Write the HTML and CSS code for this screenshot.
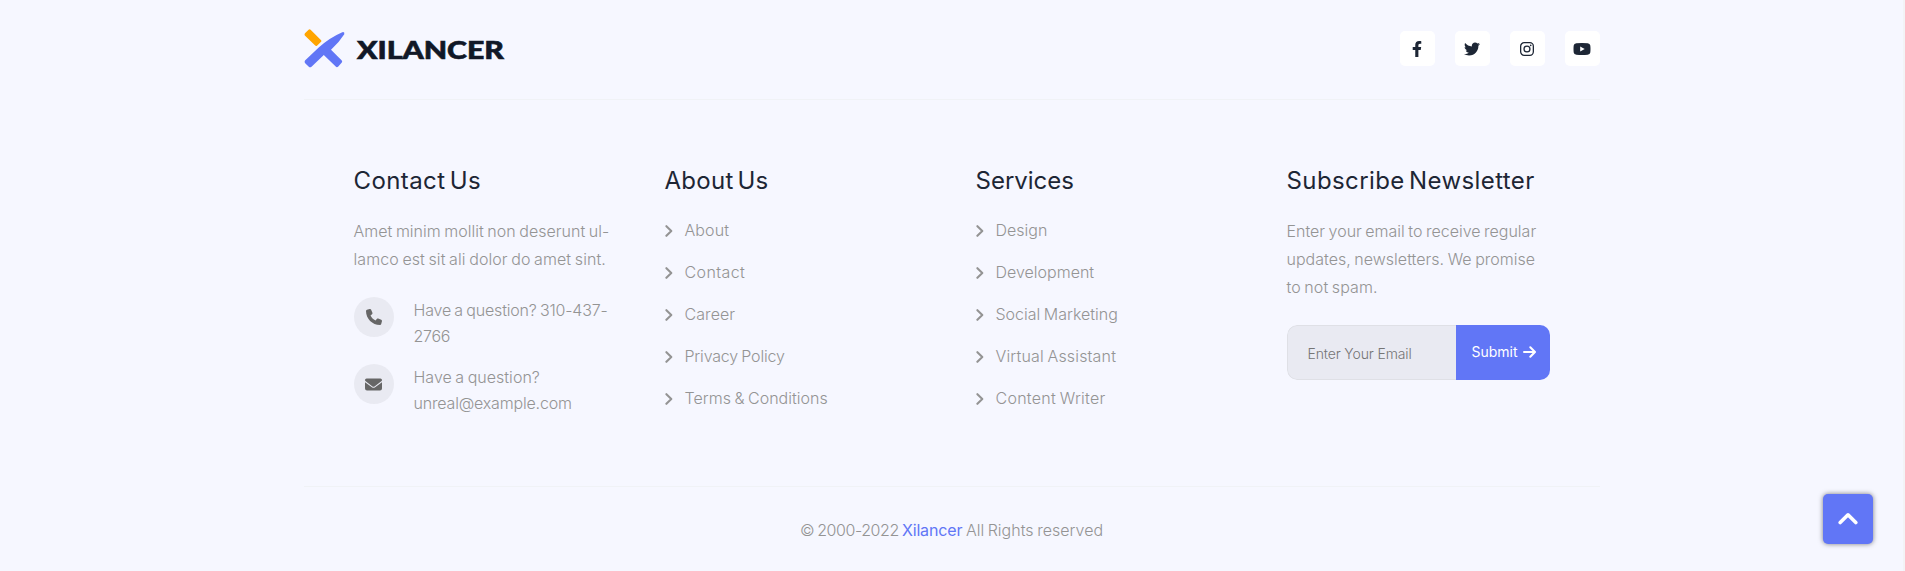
FILE: index.html
```
<!DOCTYPE html>
<html lang="en">
<head>
<meta charset="utf-8">
<title>Xilancer</title>
<link rel="stylesheet" href="styles.css">
</head>
<body>
<svg class="sprite" aria-hidden="true">
  <symbol id="chevron" viewBox="0 0 8 12"><path d="M1.4 1.2 6.3 6 1.4 10.8" fill="none" stroke="currentColor" stroke-width="2.100" stroke-linecap="round" stroke-linejoin="round"/></symbol>
</svg>
<footer class="footer">
  <div class="container">
    <div class="top">
      <a class="logo">
        <svg width="42" height="40" viewBox="0 0 42 40">
          <path d="M1 4.300 4.600.7Q5.600 0 6.600.8L17.100 11.200Q17.800 12 17.100 12.800L13 16.700Q12 17.400 11.200 16.600L.8 6.500Q.1 5.300 1 4.300Z" fill="#ffa500"/>
          <path d="M1 31.500 15 18.200Q26 8.500 38.300 3.200 40.800 2.700 40.300 5.200 35 13.500 27 20.700L37.800 31.500Q38.600 32.500 37.800 33.500L34.300 37.500Q33 38.900 31.700 37.600L19.800 26 7.500 37.700Q6 38.900 4.800 37.700L1.200 34.200Q0 33 1 31.500Z" fill="#6176f6"/>
        </svg>
        <svg width="150" height="30" viewBox="0 0 150 30" class="logo-word"><text x="0" y="24.500" textLength="147" lengthAdjust="spacingAndGlyphs">XILANCER</text></svg>
      </a>
      <div class="social">
        <a class="social-link"><svg width="10" height="16" viewBox="0 0 320 512"><path d="M279.140 288l14.220-92.660h-88.910v-60.130c0-25.350 12.420-50.060 52.240-50.060h40.420V6.260S260.430 0 225.360 0c-73.220 0-121.080 44.380-121.080 124.720v70.620H22.890V288h81.390v224h100.170V288z"/></svg></a>
        <a class="social-link"><svg width="16" height="16" viewBox="0 0 512 512"><path d="M459.370 151.716c.325 4.548.325 9.097.325 13.645 0 138.720-105.583 298.558-298.558 298.558-59.452 0-114.680-17.219-161.137-47.106 8.447.974 16.568 1.299 25.340 1.299 49.055 0 94.213-16.568 130.274-44.832-46.132-.975-84.792-31.188-98.112-72.772 6.498.974 12.995 1.624 19.818 1.624 9.421 0 18.843-1.300 27.614-3.573-48.081-9.747-84.143-51.980-84.143-102.985v-1.299c13.969 7.797 30.214 12.670 47.431 13.319-28.264-18.843-46.781-51.005-46.781-87.391 0-19.492 5.197-37.360 14.294-52.954 51.655 63.675 129.300 105.258 216.365 109.807-1.624-7.797-2.599-15.918-2.599-24.040 0-57.828 46.782-104.934 104.934-104.934 30.213 0 57.502 12.670 76.670 33.137 23.715-4.548 46.456-13.320 66.599-25.340-7.798 24.366-24.366 44.833-46.132 57.827 21.117-2.273 41.584-8.122 60.426-16.243-14.292 20.791-32.161 39.308-52.628 54.253z"/></svg></a>
        <a class="social-link"><svg width="14" height="14" viewBox="0 0 14 14"><rect x=".65" y=".65" width="12.700" height="12.700" rx="3.500" fill="none" stroke="currentColor" stroke-width="1.300"/><circle cx="7" cy="7" r="2.950" fill="none" stroke="currentColor" stroke-width="1.300"/><circle cx="10.700" cy="3.300" r=".85"/></svg></a>
        <a class="social-link"><svg width="18" height="12" viewBox="0 0 18 12"><path fill-rule="evenodd" d="M3.300.2Q9-.2 14.700.2 17 .4 17.300 2.400 17.700 6 17.300 9.600 17 11.600 14.700 11.800 9 12.200 3.300 11.800 1 11.600.7 9.600.3 6 .7 2.400 1 .4 3.300.2ZM7.200 3.400V8.600L11.700 6Z"/></svg></a>
      </div>
    </div>

    <div class="columns">
      <section>
        <h4 class="title ls-41">Contact Us</h4>
        <p class="text"><span class="ls-2">Amet minim mollit non deserunt ul-</span><br><span class="ls-8">lamco est sit ali dolor do amet sint.</span></p>
        <div class="contact">
          <span class="round"><svg width="16" height="16" viewBox="0 0 512 512"><path d="M164.900 24.600c-7.700-18.600-28-28.500-47.400-23.200l-88 24C12.100 30.200 0 46 0 64c0 247.400 200.600 448 448 448 18 0 33.800-12.100 38.600-29.500l24-88c5.300-19.400-4.600-39.700-23.200-47.400l-96-40c-16.300-6.800-35.200-2.100-46.300 11.600L304.700 368C234.300 334.700 177.300 277.700 144 207.300L193.300 167c13.700-11.200 18.400-30 11.600-46.300l-40-96z"/></svg></span>
          <span class="contact-text"><span class="ls-n18">Have a question? 310-437-</span><br><span class="ls-n30">2766</span></span>
        </div>
        <div class="contact">
          <span class="round"><svg width="17" height="13" viewBox="0 0 17 13"><path d="M1.600.5H15.400Q17 .6 17 2 17 2.800 16.300 3.300L9.500 8.400Q8.500 9 7.500 8.400L.7 3.300Q0 2.800 0 2 0 .6 1.600.5Z"/><path d="M0 4.200 6.900 9.300Q8.500 10.300 10.100 9.300L17 4.200V10.600Q16.900 12.500 15 12.500H2Q.1 12.500 0 10.600Z"/></svg></span>
          <span class="contact-text"><span class="ls-2">Have a question?</span><br><span class="ls-n18">unreal@example.com</span></span>
        </div>
      </section>

      <section>
        <h4 class="title ls-25">About Us</h4>
        <ul class="links">
          <li><svg class="chev"><use href="#chevron"/></svg><a class="ls-8">About</a></li>
          <li><svg class="chev"><use href="#chevron"/></svg><a class="ls-41">Contact</a></li>
          <li><svg class="chev"><use href="#chevron"/></svg><a class="ls-8">Career</a></li>
          <li><svg class="chev"><use href="#chevron"/></svg><a class="ls-n18">Privacy Policy</a></li>
          <li><svg class="chev"><use href="#chevron"/></svg><a class="ls-2">Terms &amp; Conditions</a></li>
        </ul>
      </section>

      <section>
        <h4 class="title">Services</h4>
        <ul class="links">
          <li><svg class="chev"><use href="#chevron"/></svg><a>Design</a></li>
          <li><svg class="chev"><use href="#chevron"/></svg><a>Development</a></li>
          <li><svg class="chev"><use href="#chevron"/></svg><a>Social Marketing</a></li>
          <li><svg class="chev"><use href="#chevron"/></svg><a class="ls-16">Virtual Assistant</a></li>
          <li><svg class="chev"><use href="#chevron"/></svg><a class="ls-25">Content Writer</a></li>
        </ul>
      </section>

      <section>
        <h4 class="title ls-41">Subscribe Newsletter</h4>
        <p class="text"><span>Enter your email to receive regular</span><br><span class="ls-2">updates, newsletters. We promise</span><br><span class="ls-8">to not spam.</span></p>
        <form class="form">
          <input class="email" type="text" placeholder="Enter Your Email">
          <button class="submit" type="button">Submit <svg width="13" height="12" viewBox="0 0 13 12"><path d="M1 6H11.600M7.300 1.200 12 6 7.300 10.800" fill="none" stroke="currentColor" stroke-width="2" stroke-linecap="round" stroke-linejoin="round"/></svg></button>
        </form>
      </section>
    </div>

    <div class="copyright"><span class="ls-year">© 2000-2022 </span><a class="brand">Xilancer</a><span class="ls-2"> All Rights reserved</span></div>
  </div>
</footer>
<a class="to-top"><svg width="20" height="13" viewBox="0 0 20 13"><path d="M2.200 10.600 10 2.800 17.800 10.600" fill="none" stroke="currentColor" stroke-width="3.600" stroke-linecap="round" stroke-linejoin="round"/></svg></a>
</body>
</html>
```
FILE: styles.css
```
* { box-sizing: border-box; margin: 0; padding: 0; }
body {
  height: 571px;
  overflow: hidden;
  background: #f6f7ff;
  border-right: 2px solid #f3f3f6;
  color: #949494;
  font: 300 16px/28px Inter, "Open Sans", sans-serif;
  word-spacing: -1px;
}
.sprite { position: absolute; width: 0; height: 0; }
svg { display: block; fill: currentColor; flex: none; }
.container { width: 1296px; margin: 0 auto; }
.top {
  height: 100px;
  padding: 0 0 2px;
  display: flex;
  align-items: center;
  justify-content: space-between;
  border-bottom: 1px solid #f0f2f6;
}
.logo { display: flex; align-items: center; gap: 11px; color: #111827; }
.logo-word { font: 900 24px Lato, sans-serif; stroke: #111827; stroke-width: .6; overflow: visible; }
.social { display: flex; gap: 20px; color: #1d2635; }
.social-link {
  width: 35px;
  height: 35px;
  border-radius: 5px;
  background: #fff;
  display: flex;
  align-items: center;
  justify-content: center;
}
.columns {
  height: 387px;
  padding: 63px 50px 0;
  display: grid;
  grid-template-columns: repeat(4, 263px);
  gap: 48px;
  border-bottom: 1px solid #f0f2f6;
}
.title { color: #1d2635; font-size: 24px; font-weight: 400; line-height: 36px; word-spacing: -3px; }
.text { margin-top: 18px; white-space: nowrap; }
.contact { display: flex; gap: 20px; margin-top: 15px; }
.text + .contact { margin-top: 24px; }
.round {
  width: 40px;
  height: 40px;
  border-radius: 50%;
  background: #e9eaf2;
  color: #666;
  display: flex;
  align-items: center;
  justify-content: center;
}
.contact-text { line-height: 26px; white-space: nowrap; }
.links { list-style: none; margin-top: 17px; display: grid; gap: 14px; }
.links li { display: flex; align-items: center; gap: 12px; white-space: nowrap; }
.chev { width: 8px; height: 12px; margin-top: 2px; }
.form { display: flex; height: 55px; margin-top: 24px; border-radius: 10px; overflow: hidden; }
.email {
  width: 169px;
  padding: 1px 20px 0;
  border: 1px solid #dfe0e6;
  border-right: 0;
  border-radius: 10px 0 0 10px;
  background: #e9eaf2;
  font: 300 14px Inter, sans-serif;
  letter-spacing: -.14px;
}
.email::placeholder { color: #757575; }
.submit {
  flex: 1;
  display: flex;
  align-items: center;
  justify-content: center;
  gap: 5px;
  padding: 0 0 2px 2px;
  border: 0;
  background: #6176f6;
  color: #fff;
  font: 400 14px Inter, sans-serif;
}
.copyright { padding-top: 29px; text-align: center; white-space: pre; }
.brand { color: #6176f6; font-weight: 400; letter-spacing: -.14px; }
.to-top {
  position: fixed;
  right: 32px;
  bottom: 27px;
  width: 50px;
  height: 50px;
  padding-bottom: 2px;
  border-radius: 5px;
  background: #6176f6;
  color: #fff;
  box-shadow: 0 0 5px rgba(0, 0, 0, .5);
  display: flex;
  align-items: center;
  justify-content: center;
}
.ls-n30 { letter-spacing: -.3px; }
.ls-n18 { letter-spacing: -.18px; }
.ls-2 { letter-spacing: .02px; }
.ls-8 { letter-spacing: .08px; }
.ls-16 { letter-spacing: .16px; }
.ls-25 { letter-spacing: .26px; }
.ls-41 { letter-spacing: .41px; }
.ls-year { letter-spacing: -.43px; }
```
